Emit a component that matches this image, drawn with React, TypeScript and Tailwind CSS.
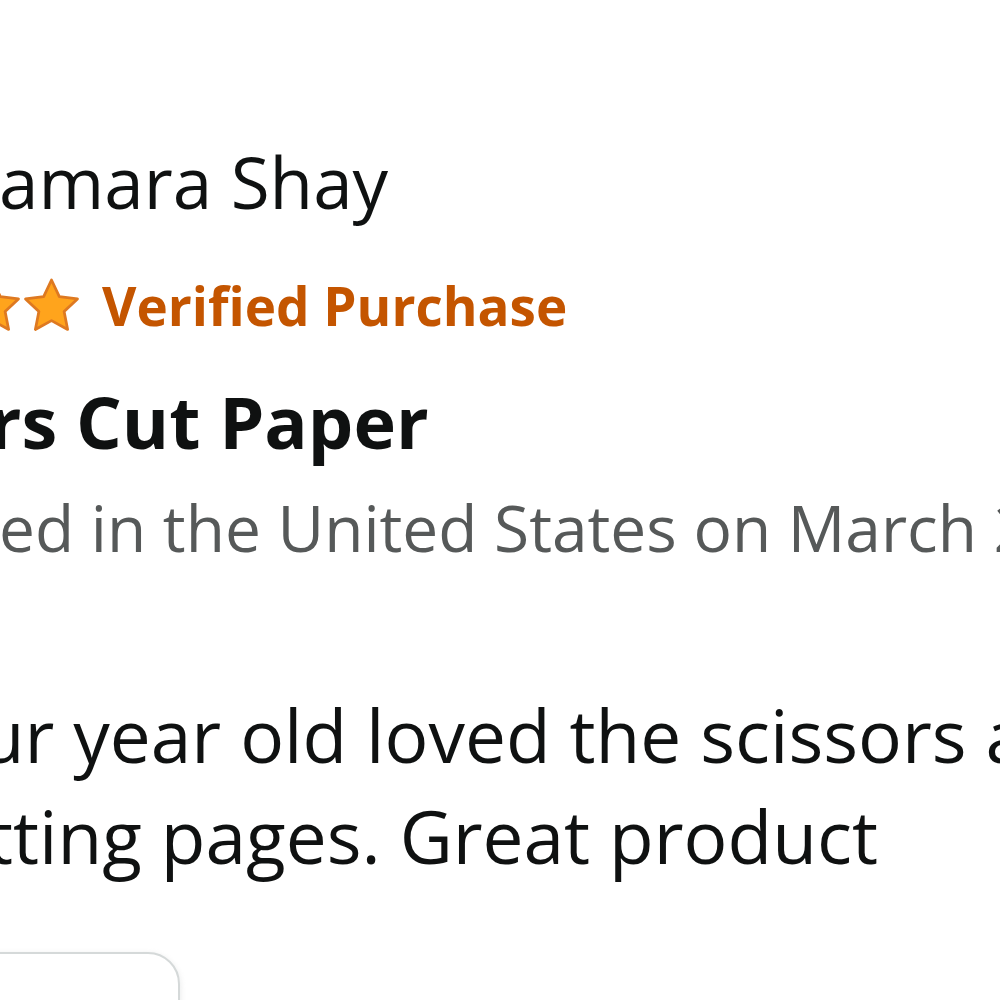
function Star() {
  return (
    <svg width="61" height="58" viewBox="0 0 24 23" className="shrink-0 -mx-[1px]">
      <path
        d="M12 1.2l3.1 6.6 7.2.9-5.3 5 1.4 7.1L12 17.3l-6.4 3.5 1.4-7.1-5.3-5 7.2-.9z"
        fill="#FFA41C"
        stroke="#DE7921"
        strokeWidth="1.1"
        strokeLinejoin="round"
      />
    </svg>
  )
}

function ReviewCard() {
  return (
    <div className="ml-[-210px] w-[1600px] font-['Open_Sans',sans-serif] text-[#0F1111]">
      {/* Reviewer row */}
      <div className="mt-[134px] flex items-center gap-[50px]">
        <div className="w-[120px] h-[120px] rounded-full bg-[#e3e6e6] shrink-0 -my-[12px]" />
        <span className="text-[71px] leading-[96px]">Tamara Shay</span>
      </div>

      {/* Rating + verified badge */}
      <div className="mt-[41px] flex items-center gap-[21px] h-[70px]">
        <div className="flex -ml-[4px]">
          {[0, 1, 2, 3, 4].map((i) => (
            <Star key={i} />
          ))}
        </div>
        <span className="text-[53px] leading-[70px] font-bold text-[#C45500]">Verified Purchase</span>
      </div>

      <h3 className="mt-[32px] -ml-[16px] text-[72px] leading-[96px] font-bold">Scissors Cut Paper</h3>

      <p className="mt-[17px] text-[64px] leading-[84px] text-[#565959] whitespace-nowrap">
        Reviewed in the United States on March 22, 2023
      </p>

      <p className="mt-[114px] text-[73px] leading-[101px] whitespace-nowrap">
        My four year old loved the scissors and used them
        <br />
        for cutting pages. Great product
      </p>

      <button className="mt-[66px] w-[390px] h-[150px] rounded-[32px] border-2 border-[#D5D9D9] bg-white shadow-[0_2px_6px_rgba(213,217,217,0.6)] text-[60px] text-[#0F1111]">
        Helpful
      </button>
    </div>
  )
}

export default function App() {
  return (
    <div className="w-[1000px] h-[1000px] overflow-hidden bg-white">
      <ReviewCard />
    </div>
  )
}
